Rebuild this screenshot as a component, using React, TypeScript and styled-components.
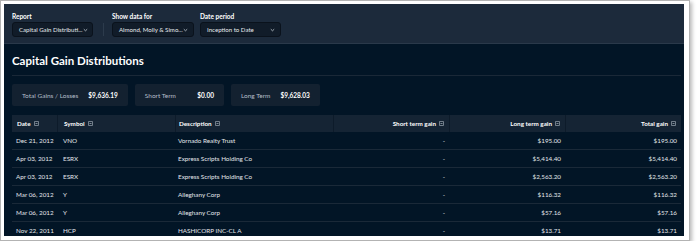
import React from "react";
import styled, { createGlobalStyle } from "styled-components";

const Global = createGlobalStyle`
  html, body { margin: 0; padding: 0; background: #ffffff; }
  body { font-family: Lato, "Open Sans", Arial, sans-serif; }
  * { box-sizing: border-box; }
`;

const Frame = styled.div`
  width: 690px;
  height: 241px;
  border: 1px solid #b3b3b3;
  padding: 3px;
  background: #ffffff;
  box-shadow: 2px 2px 4px rgba(0, 0, 0, 0.28);
`;

const Panel = styled.div`
  width: 680px;
  height: 232px;
  overflow: hidden;
  background: #021526;
  color: #e6e9ed;
`;

const FilterBar = styled.div`
  display: flex;
  align-items: flex-end;
  height: 40px;
  padding: 8px 8px 6px 8px;
  background: #1c2a3b;
  border-bottom: 1px solid #2a394a;
`;

const FilterGroup = styled.div<{ $gapLeft?: number }>`
  display: flex;
  flex-direction: column;
  margin-left: ${(p) => p.$gapLeft ?? 0}px;
`;

const FilterLabel = styled.div`
  font-size: 6.5px;
  font-weight: 700;
  line-height: 9px;
  margin-bottom: 1px;
  color: #ffffff;
`;

const Select = styled.div<{ $w: number }>`
  display: flex;
  align-items: center;
  justify-content: space-between;
  width: ${(p) => p.$w}px;
  height: 15px;
  padding: 0 5px 0 6px;
  background: #111c29;
  border: 1px solid #0a121c;
  border-radius: 3px;
  font-size: 6.1px;
  color: #e8ebee;
  white-space: nowrap;
`;

const Divider = styled.div`
  width: 1px;
  height: 13px;
  margin: 0 8px 1px 10px;
  background: #2c3b4c;
`;

const Content = styled.div`
  padding: 0 3px 0 8px;
`;

const TitleRow = styled.div`
  margin-top: 10px;
  padding-bottom: 8px;
  border-bottom: 1px solid #1a2837;
`;

const Title = styled.h1`
  margin: 0;
  font-size: 11.5px;
  line-height: 13px;
  font-weight: 700;
  color: #ffffff;
`;

const Cards = styled.div`
  display: flex;
  gap: 7px;
  margin-top: 8px;
`;

const Card = styled.div`
  display: flex;
  align-items: center;
  height: 22px;
  padding: 0 10px;
  background: #132130;
  border-radius: 2px;
  font-size: 6.5px;
`;

const CardLabel = styled.span`
  color: #b4bec9;
  margin-right: 10px;
`;

const CardValue = styled.span`
  min-width: 28px;
  text-align: right;
  font-weight: 700;
  color: #ffffff;
`;

const Table = styled.div`
  margin-top: 9px;
  width: 669px;
`;

const cols = "45px 118px 158px 116px 116px 116px";

const HeadRow = styled.div`
  display: grid;
  grid-template-columns: ${cols};
  height: 17px;
`;

const HeadCell = styled.div<{ $right?: boolean; $pl?: number }>`
  display: flex;
  align-items: center;
  justify-content: ${(p) => (p.$right ? "flex-end" : "flex-start")};
  gap: 3px;
  padding: 0 5px 0 ${(p) => p.$pl ?? 5}px;
  background: #152434;
  font-size: 6.3px;
  font-weight: 700;
  color: #ffffff;
  & + & {
    border-left: 1px solid #0d1b2a;
  }
`;

const Row = styled.div`
  display: grid;
  grid-template-columns: ${cols};
  height: 18px;
  border-bottom: 1px solid #1a2938;
`;

const Cell = styled.div<{ $right?: boolean; $pl?: number }>`
  display: flex;
  align-items: center;
  justify-content: ${(p) => (p.$right ? "flex-end" : "flex-start")};
  padding: 0 4px 0 ${(p) => p.$pl ?? 4}px;
  font-size: 6.3px;
  color: #e3e7eb;
  white-space: nowrap;
`;

const Chevron = () => (
  <svg width="5" height="4" viewBox="0 0 5 4" style={{ flex: "none" }}>
    <path d="M0.8 1.2 L2.5 2.8 L4.2 1.2" fill="none" stroke="#c9d0d8" strokeWidth="0.8" />
  </svg>
);

const SortIcon = () => (
  <svg width="5" height="5" viewBox="0 0 5 5" style={{ flex: "none" }}>
    <rect x="0.4" y="0.4" width="4.2" height="4.2" fill="none" stroke="#aab4bf" strokeWidth="0.7" rx="0.5" />
    <path d="M1.5 2.5 H3.5" stroke="#aab4bf" strokeWidth="0.7" />
  </svg>
);

const rows = [
  ["Dec 21, 2012", "VNO", "Vornado Realty Trust", "-", "$195.00", "$195.00"],
  ["Apr 03, 2012", "ESRX", "Express Scripts Holding Co", "-", "$5,414.40", "$5,414.40"],
  ["Apr 03, 2012", "ESRX", "Express Scripts Holding Co", "-", "$2,563.20", "$2,563.20"],
  ["Mar 06, 2012", "Y", "Alleghany Corp", "-", "$116.32", "$116.32"],
  ["Mar 06, 2012", "Y", "Alleghany Corp", "-", "$57.16", "$57.16"],
  ["Nov 22, 2011", "HCP", "HASHICORP INC-CL A", "-", "$13.71", "$13.71"],
];

const headers: { label: string; right?: boolean; pl?: number }[] = [
  { label: "Date", pl: 5 },
  { label: "Symbol", pl: 6 },
  { label: "Description", pl: 3 },
  { label: "Short term gain", right: true },
  { label: "Long term gain", right: true },
  { label: "Total gain", right: true },
];

export default function App() {
  return (
    <>
      <Global />
      <Frame>
        <Panel>
          <FilterBar>
            <FilterGroup>
              <FilterLabel>Report</FilterLabel>
              <Select $w={81}>
                <span>Capital Gain Distributi...</span>
                <Chevron />
              </Select>
            </FilterGroup>
            <Divider />
            <FilterGroup>
              <FilterLabel>Show data for</FilterLabel>
              <Select $w={82}>
                <span>Almond, Molly &amp; Simo...</span>
                <Chevron />
              </Select>
            </FilterGroup>
            <FilterGroup $gapLeft={6}>
              <FilterLabel>Date period</FilterLabel>
              <Select $w={81}>
                <span>Inception to Date</span>
                <Chevron />
              </Select>
            </FilterGroup>
          </FilterBar>
          <Content>
            <TitleRow>
              <Title>Capital Gain Distributions</Title>
            </TitleRow>
            <Cards>
              <Card>
                <CardLabel>Total Gains / Losses</CardLabel>
                <CardValue>$9,636.19</CardValue>
              </Card>
              <Card>
                <CardLabel>Short Term</CardLabel>
                <CardValue>$0.00</CardValue>
              </Card>
              <Card>
                <CardLabel>Long Term</CardLabel>
                <CardValue>$9,628.03</CardValue>
              </Card>
            </Cards>
            <Table>
              <HeadRow>
                {headers.map((h) => (
                  <HeadCell key={h.label} $right={h.right} $pl={h.pl}>
                    {h.label}
                    <SortIcon />
                  </HeadCell>
                ))}
              </HeadRow>
              {rows.map((r, i) => (
                <Row key={i}>
                  {r.map((c, j) => (
                    <Cell key={j} $right={j >= 3} $pl={j === 1 ? 6 : j === 2 ? 3 : 4}>
                      {c}
                    </Cell>
                  ))}
                </Row>
              ))}
            </Table>
          </Content>
        </Panel>
      </Frame>
    </>
  );
}
